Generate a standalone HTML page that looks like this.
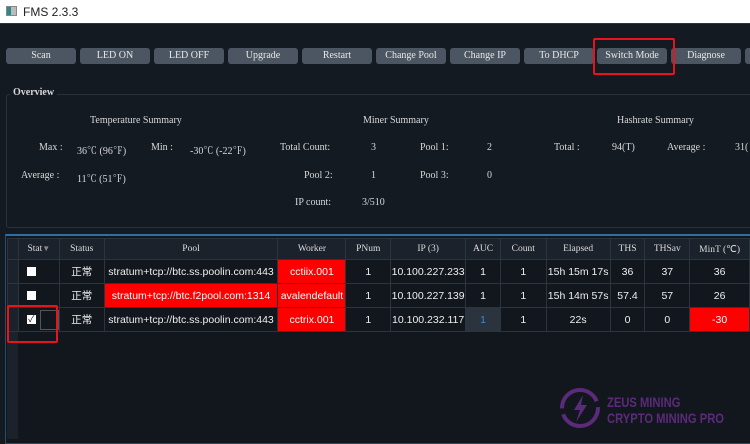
<!DOCTYPE html>
<html><head><meta charset="utf-8"><style>
*{margin:0;padding:0;box-sizing:border-box}
body{width:750px;height:439px;overflow:hidden;background:#141a22;position:relative;font-family:"Liberation Sans","Noto Sans CJK SC",sans-serif;color:#e8e8e8}
.a{position:absolute}
.title{left:0;top:0;width:750px;height:24px;background:#fff;border-bottom:1px solid #333;color:#222;font-size:12px}
.btn{position:absolute;top:48px;width:70px;height:16px;background:#4c5663;border-radius:3px;color:#e8e8e8;font:10px "Liberation Serif",serif;text-align:center;line-height:16px}
.s{font:10px "Liberation Serif","Noto Serif CJK SC",serif;color:#d8d8d8;position:absolute;white-space:nowrap}
table{position:absolute;left:7px;top:238px;border-collapse:collapse;table-layout:fixed}
td,th{border:1px solid #2c343e;text-align:center;font-size:10.5px;height:24px;white-space:nowrap;overflow:hidden;color:#eee}
th{font:9.5px "Liberation Serif",serif;height:21px;background:#1b222b;color:#ddd}
td{background:#12171e}
.r{background:#ff0000 !important;color:#fff}
.cb{display:inline-block;width:9px;height:9px;background:#fff;vertical-align:middle}
</style></head><body>
<div class="a title"><div class="a" style="left:6px;top:6px;width:11px;height:10px;background:#bbb;border:1px solid #888"><div style="width:4px;height:8px;background:#2a8a8a"></div></div><div class="a" style="left:23px;top:5px">FMS 2.3.3</div></div>

<div class="btn" style="left:6px">Scan</div>
<div class="btn" style="left:80px">LED ON</div>
<div class="btn" style="left:154px">LED OFF</div>
<div class="btn" style="left:228px">Upgrade</div>
<div class="btn" style="left:302px">Restart</div>
<div class="btn" style="left:376px">Change Pool</div>
<div class="btn" style="left:450px">Change IP</div>
<div class="btn" style="left:524px">To DHCP</div>
<div class="btn" style="left:597px">Switch Mode</div>
<div class="btn" style="left:671px">Diagnose</div>
<div class="btn" style="left:745px">&nbsp;</div>
<div class="a" style="left:593px;top:38px;width:82px;height:37px;border:2px solid #e8141c;border-radius:2px"></div>

<div class="a" style="left:6px;top:94px;width:750px;height:134px;border:1px solid #2a313a;border-radius:3px"></div>
<div class="s" style="left:10px;top:87px;background:#141a22;padding:0 3px;font-weight:bold">Overview</div>
<div class="s" style="left:90px;top:115px">Temperature Summary</div>
<div class="s" style="left:363px;top:115px">Miner Summary</div>
<div class="s" style="left:617px;top:115px">Hashrate Summary</div>
<div class="s" style="left:39px;top:142px">Max :</div>
<div class="s" style="left:77px;top:142px">36℃ (96℉)</div>
<div class="s" style="left:151px;top:142px">Min :</div>
<div class="s" style="left:190px;top:142px">-30℃ (-22℉)</div>
<div class="s" style="left:280px;top:142px">Total Count:</div>
<div class="s" style="left:371px;top:142px">3</div>
<div class="s" style="left:420px;top:142px">Pool 1:</div>
<div class="s" style="left:487px;top:142px">2</div>
<div class="s" style="left:554px;top:142px">Total :</div>
<div class="s" style="left:612px;top:142px">94(T)</div>
<div class="s" style="left:667px;top:142px">Average :</div>
<div class="s" style="left:735px;top:142px">31(</div>
<div class="s" style="left:21px;top:170px">Average :</div>
<div class="s" style="left:77px;top:170px">11℃ (51℉)</div>
<div class="s" style="left:304px;top:170px">Pool 2:</div>
<div class="s" style="left:371px;top:170px">1</div>
<div class="s" style="left:420px;top:170px">Pool 3:</div>
<div class="s" style="left:487px;top:170px">0</div>
<div class="s" style="left:295px;top:197px">IP count:</div>
<div class="s" style="left:362px;top:197px">3/510</div>

<div class="a" style="left:5px;top:234px;width:750px;height:210px;border:1px solid #2d4a66;border-top:2px solid #2f6ea3;background:#12171e"></div>
<div class="a" style="left:7px;top:238px;width:11px;height:201px;background:#1b222b"></div>
<table>
<colgroup><col style="width:11px"><col style="width:40px"><col style="width:45px"><col style="width:174px"><col style="width:68px"><col style="width:45px"><col style="width:75px"><col style="width:35px"><col style="width:46px"><col style="width:64px"><col style="width:35px"><col style="width:45px"><col style="width:60px"></colgroup>
<tr><th></th><th>Stat<span style="color:#888;font-size:8px">▼</span></th><th>Status</th><th>Pool</th><th>Worker</th><th>PNum</th><th>IP (3)</th><th>AUC</th><th>Count</th><th>Elapsed</th><th>THS</th><th>THSav</th><th>MinT (℃)</th></tr>
<tr><td style="background:#1b222b"></td><td style="text-align:left;padding-left:8px"><span class="cb"></span></td><td>正常</td><td>stratum+tcp://btc.ss.poolin.com:443</td><td class="r">cctiix.001</td><td>1</td><td>10.100.227.233</td><td>1</td><td>1</td><td>15h 15m 17s</td><td>36</td><td>37</td><td>36</td></tr>
<tr><td style="background:#1b222b"></td><td style="text-align:left;padding-left:8px"><span class="cb"></span></td><td>正常</td><td class="r">stratum+tcp://btc.f2pool.com:1314</td><td class="r">avalendefault</td><td>1</td><td>10.100.227.139</td><td>1</td><td>1</td><td>15h 14m 57s</td><td>57.4</td><td>57</td><td>26</td></tr>
<tr><td style="background:#1b222b"></td><td style="text-align:left;padding-left:8px"><span class="cb" style="font-size:9px;line-height:9px;color:#222;text-align:center">✓</span><span style="display:inline-block;width:19px;height:20px;border:1px solid #555;vertical-align:middle;margin-left:4px"></span></td><td>正常</td><td>stratum+tcp://btc.ss.poolin.com:443</td><td class="r">cctrix.001</td><td>1</td><td>10.100.232.117</td><td style="background:#2a333e;color:#3a8ad0">1</td><td>1</td><td>22s</td><td>0</td><td>0</td><td class="r">-30</td></tr>
</table>
<div class="a" style="left:7px;top:305px;width:51px;height:38px;border:2px solid #e8141c;border-radius:2px"></div>

<svg class="a" style="left:558px;top:386px" width="44" height="44" viewBox="0 0 44 44"><circle cx="22" cy="22" r="18" fill="none" stroke="#5b2a7a" stroke-width="4" stroke-dasharray="50 6"/><path d="M25 9 L16 24 H22 L18 36 L29 19 H23 Z" fill="#5b2a7a"/></svg>
<div class="a" style="left:607px;top:394px;font:bold 14px 'Liberation Sans',sans-serif;color:#5b2a7a;line-height:16px;white-space:nowrap;transform:scaleX(0.8);transform-origin:0 0">ZEUS MINING<br>CRYPTO MINING PRO</div>
</body></html>
